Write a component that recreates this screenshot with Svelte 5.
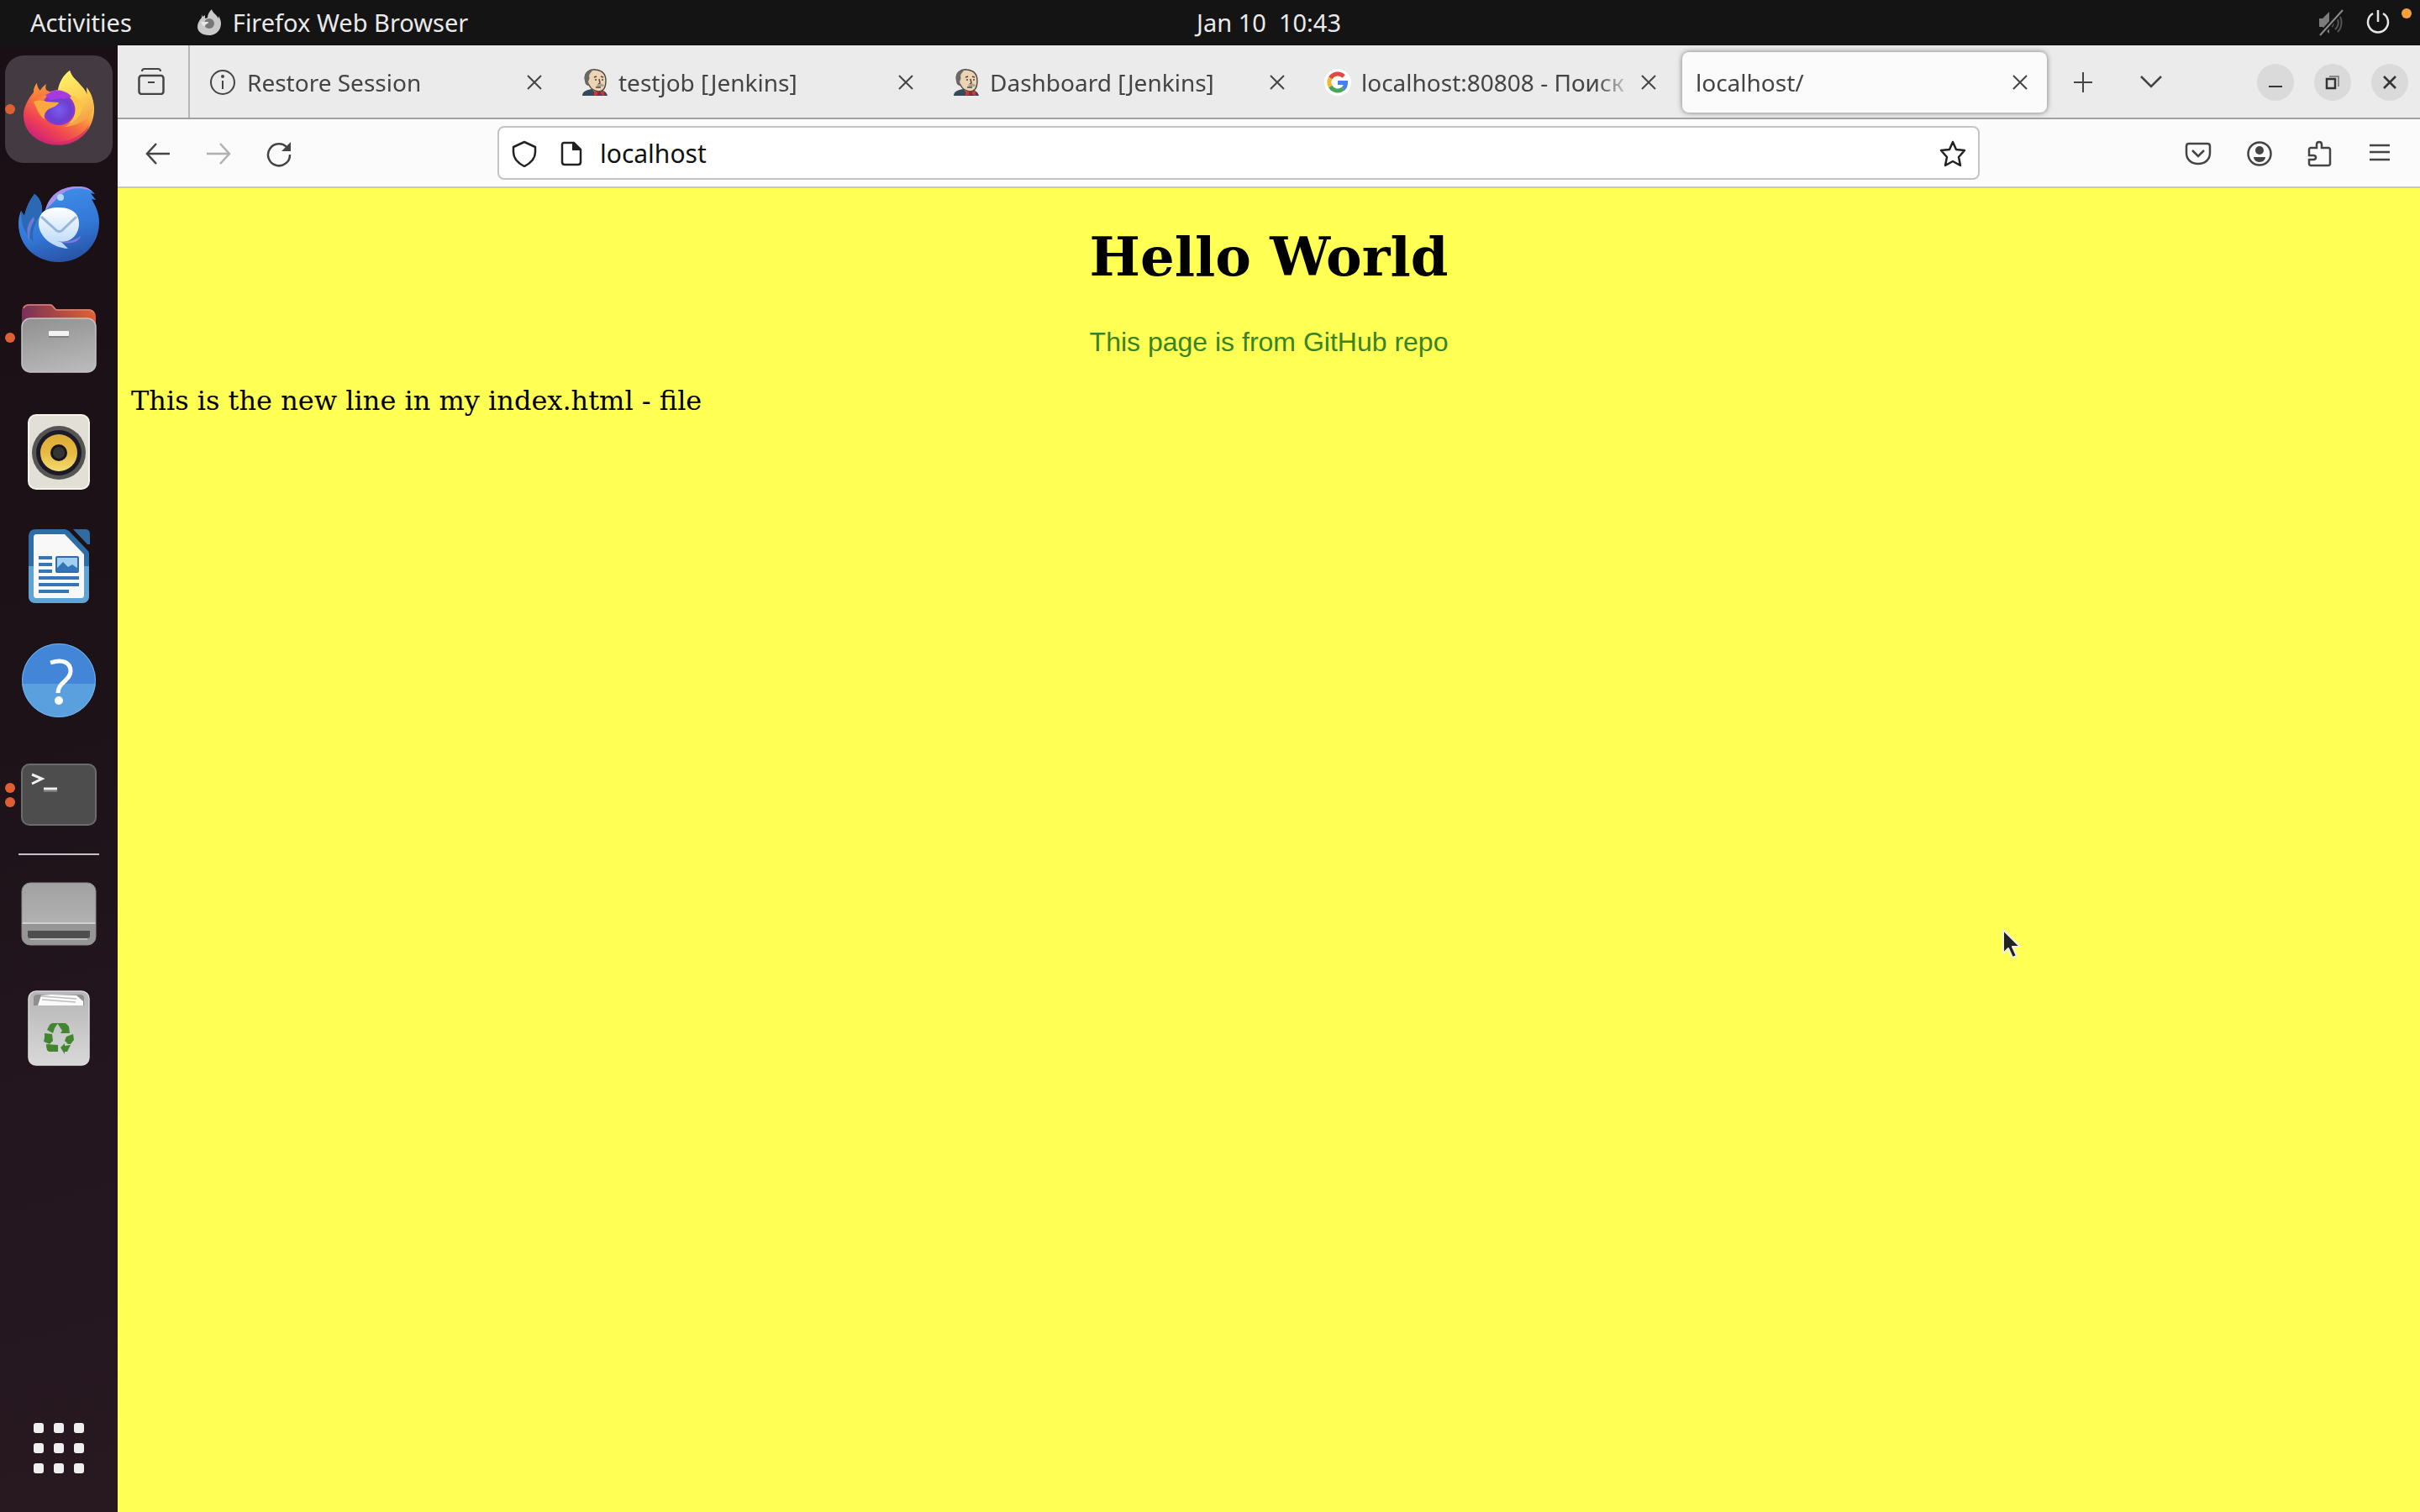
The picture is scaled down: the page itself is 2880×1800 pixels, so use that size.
<script>
  let url = $state('localhost');
  let active = $state(4);

  const tabs = [
    { title: 'Restore Session', icon: 'info' },
    { title: 'testjob [Jenkins]', icon: 'jenkins' },
    { title: 'Dashboard [Jenkins]', icon: 'jenkins' },
    { title: 'localhost:80808 - Поиск', icon: 'google' },
    { title: 'localhost/', icon: null }
  ];

  const dock = [
    { name: 'Firefox Web Browser', icon: 'firefox', windows: 1, focused: true },
    { name: 'Thunderbird Mail', icon: 'thunderbird', windows: 0 },
    { name: 'Files', icon: 'files', windows: 1 },
    { name: 'Rhythmbox', icon: 'rhythmbox', windows: 0 },
    { name: 'LibreOffice Writer', icon: 'writer', windows: 0 },
    { name: 'Help', icon: 'help', windows: 0 },
    { name: 'Terminal', icon: 'terminal', windows: 2 }
  ];
  const places = [
    { name: 'Drive', icon: 'drive', windows: 0 },
    { name: 'Trash', icon: 'trash', windows: 0 }
  ];
  const cells = [0, 1, 2, 3, 4, 5, 6, 7, 8];
</script>

{#snippet cross()}
  <svg class="i32" viewBox="0 0 32 32"><path d="M8 8l16 16M24 8L8 24" fill="none" stroke="currentColor" stroke-width="2" /></svg>
{/snippet}

{#snippet favicon(kind)}
  {#if kind === 'info'}
    <svg class="i32" viewBox="0 0 32 32">
      <circle cx="15" cy="16" r="14" fill="none" stroke="#444" stroke-width="2" />
      <path d="M15 14v10" stroke="#444" stroke-width="2" /><circle cx="15" cy="9" r="2" fill="#444" />
    </svg>
  {:else if kind === 'jenkins'}
    <svg class="i32" viewBox="0 0 32 32">
      <path d="M1 32c0-5 5-7 11-8l9 1c6 0 9 3 10 7z" fill="#34495a" />
      <path d="M11 22l5 6 7-3v-4z" fill="#e8e3dc" />
      <path d="M5 15C2 4 10 0 17 1c9 1 12 7 12 13 0 8-3 13-9 13-6-1-9-3-11-8-2 0-4-1-4-4z" fill="#ecd3b4" stroke="#51463f" stroke-width="1.4" />
      <path d="M4 14C2 5 8 1 14 1c-2 2-4 4-5 7 1 3 0 5-1 7l2 6c-4-2-5-4-6-7z" fill="#6b6865" />
      <path d="M15 10l3-1M23 9l3 1M17 12v2M25 12v2M21 12l1 5-2 1M17 22h6" fill="none" stroke="#51463f" stroke-width="1.5" />
      <path d="M18 19c3-2 6-2 9 0l-1 2h-7z" fill="#aaa198" />
      <path d="M15 26l6 2 6-2v6l-5-2-7 2z" fill="#cf3931" />
      <circle cx="21" cy="29" r="2" fill="#862c2b" />
    </svg>
  {:else if kind === 'google'}
    <svg class="i32" viewBox="0 0 32 32">
      <circle cx="16" cy="16" r="16" fill="#fff" />
      <g fill="none" stroke-width="5">
        <path d="M7.300 11A10 10 0 0 1 23.100 8.900" stroke="#df4b3f" />
        <path d="M7.300 21A10 10 0 0 1 7.300 11" stroke="#f2b92c" />
        <path d="M22.400 23.700A10 10 0 0 1 7.300 21" stroke="#4ba457" />
        <path d="M16 16.500h9.500c0 3-1 5.500-3.100 7.200" stroke="#4a80ee" />
      </g>
    </svg>
  {/if}
{/snippet}

{#snippet appIcon(kind)}
  <svg class="app" viewBox="0 0 128 128" aria-hidden="true">
    {#if kind === 'firefox'}
      <defs>
        <linearGradient id="ffBody" x1="0.85" y1="0.1" x2="0.3" y2="1">
          <stop offset="0" stop-color="#fff05e" /><stop offset="0.3" stop-color="#fcc44a" />
          <stop offset="0.55" stop-color="#f8783d" /><stop offset="0.8" stop-color="#ee3f55" />
          <stop offset="1" stop-color="#d02379" />
        </linearGradient>
        <linearGradient id="ffTail" x1="0.3" y1="0" x2="0.6" y2="1">
          <stop offset="0" stop-color="#fff26a" /><stop offset="0.5" stop-color="#fcd354" />
          <stop offset="1" stop-color="#f59a45" />
        </linearGradient>
        <radialGradient id="ffGlobe" cx="0.5" cy="0.55" r="0.6">
          <stop offset="0" stop-color="#7b5cf0" /><stop offset="0.55" stop-color="#6b3fd0" />
          <stop offset="1" stop-color="#a133d8" />
        </radialGradient>
        <linearGradient id="ffHead" x1="0" y1="0" x2="0.2" y2="1">
          <stop offset="0" stop-color="#f8a23a" /><stop offset="1" stop-color="#f7713c" />
        </linearGradient>
      </defs>
      <path d="M38 33c-3 4-4 7-4 11-7 8-12 18-12 27 0 22 18 35 42 35 24 0 42-18 42-42 0-9-3-18-9-26l1 9c-3-7-7-10-11-15-5-5-8-8-10-14-7 5-12 13-14 23-8 1-12 3-16 6-1-3-1-6 0-10-4 3-6 5-7 8-2-4-2-8-2-12z" fill="url(#ffBody)" />
      <path d="M77 18c-8 6-12 13-14 23 12 1 21 7 22 20 1 12-6 22-16 24 19-1 30-9 36-20 1-11-2-20-8-27l1 9c-3-7-7-10-11-15-5-5-8-8-10-14z" fill="url(#ffTail)" />
      <circle cx="64" cy="63" r="20" fill="url(#ffGlobe)" />
      <path d="M48 47c6-5 14-7 22-4 5 2 8 4 10 8-4-1-7-1-9 1-7-1-12 0-17 2z" fill="#a53bdc" />
      <path d="M34 55c5-2 11-2 15 0l15 1c-1 3-5 5-10 7-5 2-8 6-7 13-6-4-8-10-13-21z" fill="#fda83c" />
      <path d="M38 33c-3 4-4 7-4 11l-4 9 17-5c2-2 4-3 8-4l-6-3c-1-2-1-4 0-7-3 2-6 5-7 8-3-3-4-6-4-9z" fill="url(#ffHead)" />
      <path d="M77 50c9 9 9 22-1 31 17-6 22-27 5-33z" fill="#ffc347" />
      <path d="M28 88c9 13 26 17 43 14 13-3 23-10 29-19-5 15-19 24-36 24-17 0-29-7-36-19z" fill="#cf286f" opacity="0.65" />
    {:else if kind === 'thunderbird'}
      <defs>
        <linearGradient id="tbBody" x1="0.3" y1="0" x2="0.6" y2="1">
          <stop offset="0" stop-color="#4090ea" /><stop offset="0.6" stop-color="#3377d6" /><stop offset="1" stop-color="#2852a3" />
        </linearGradient>
        <linearGradient id="tbMail" x1="0" y1="0" x2="0" y2="1">
          <stop offset="0" stop-color="#fff" /><stop offset="1" stop-color="#b5d7f8" />
        </linearGradient>
      </defs>
      <path d="M48 48C53 28 70 19 88 20c9 0 15 4 19 9l-5-1 6 8-5-1c5 8 9 17 9 28 0 27-21 47-48 47S16 91 16 64c0-5 1-10 3-15l4 6c2-10 6-18 12-26 6 4 10 12 9 23z" fill="url(#tbBody)" />
      <path d="M19 49l4 6c2-10 6-18 12-26 6 4 10 12 9 23-9 10-13 23-10 34-10-9-16-22-15-37z" fill="#2b69b5" />
      <path d="M48 48C53 28 70 19 88 20c7 0 12 2 16 6-11-5-24-5-32 0-11 7-15 15-24 22z" fill="#a891ea" />
      <circle cx="66" cy="33" r="4" fill="#a9dcff" />
      <path d="M40 64c0-14 10-19 24-19s24 6 24 19-9 22-21 22l8 8c-18-1-35-14-35-30z" fill="url(#tbMail)" />
      <path d="M43 56l19 17c2 1 3 1 5 0l18-17" fill="none" stroke="#95b7dc" stroke-width="3" />
      <path d="M62 85c13 2 21-1 28-6-2 8-14 11-28 6z" fill="#7d79de" />
      <path d="M34 56c-9 9-9 19-5 29 0-10 1-17 6-25z" fill="#7079d8" />
    {:else if kind === 'files'}
      <defs>
        <linearGradient id="flBack" x1="0" y1="0" x2="1" y2="0"><stop offset="0" stop-color="#77305a" /><stop offset="1" stop-color="#e2622f" /></linearGradient>
        <linearGradient id="flFront" x1="0.4" y1="0" x2="0.7" y2="1"><stop offset="0" stop-color="#949494" /><stop offset="1" stop-color="#b9b9b9" /></linearGradient>
      </defs>
      <path d="M20 60V33c0-6 3-9 9-9h25c4 0 4 6 8 6h37c6 0 9 4 9 9v25z" fill="url(#flBack)" />
      <path d="M22 29c1-3 3-4 7-4h25c4 0 4 6 8 6h37c4 0 6 2 7 4" fill="none" stroke="#d08579" stroke-width="1.5" />
      <rect x="20" y="41" width="88" height="64" rx="10" fill="url(#flFront)" stroke="#c3c3c3" stroke-width="1.5" />
      <rect x="52" y="56" width="24" height="6" rx="1" fill="#f3f3f3" />
      <path d="M52 63h24" stroke="#777" stroke-width="1.500" />
    {:else if kind === 'rhythmbox'}
      <defs><linearGradient id="rbCone" x1="0" y1="0" x2="0" y2="1"><stop offset="0" stop-color="#dcab38" /><stop offset="0.5" stop-color="#e6b941" /><stop offset="1" stop-color="#f5dc73" /></linearGradient></defs>
      <rect x="28" y="20" width="72" height="88" rx="9" fill="#e2dfd6" stroke="#f4f2ec" stroke-width="2" />
      <circle cx="64" cy="65" r="32" fill="#555553" /><circle cx="64" cy="65" r="27" fill="#1d1a28" />
      <circle cx="64" cy="65" r="22" fill="url(#rbCone)" /><circle cx="64" cy="65" r="10" fill="#161616" /><circle cx="64" cy="65" r="7" fill="#343434" />
    {:else if kind === 'writer'}
      <path d="M37 20h34c2 0 3 1 5 2l22 23c2 2 2 3 2 5v49c0 6-3 9-9 9H37c-6 0-9-3-9-9V29c0-6 3-9 9-9z" fill="#2e6da6" />
      <path d="M28 64h72v35c0 6-3 9-9 9H37c-6 0-9-3-9-9z" fill="#60a5d2" />
      <path d="M38 26h33l23 24v48c0 3-1 4-4 4H38c-3 0-4-1-4-4V30c0-3 1-4 4-4z" fill="#f8f8f8" />
      <path d="M81 20h14c4 0 6 2 6 6v12h-3z" fill="#326ba0" />
      <path d="M40 54h16M40 62h16M40 70h16M40 78h48M40 86h48M40 94h36" stroke="#3475b8" stroke-width="4" />
      <rect x="61" y="53" width="26" height="18" rx="1" fill="#a1d1ee" stroke="#2f6cae" stroke-width="2" />
      <path d="M62 70v-4l7-7 6 6 5-3 7 5v3z" fill="#3475b8" />
    {:else if kind === 'help'}
      <circle cx="64" cy="64" r="44" fill="#4385d6" />
      <path d="M20.200 68A44 44 0 0 0 107.800 68z" fill="#5aa0df" />
      <circle cx="64" cy="64" r="43.500" fill="none" stroke="#71b2e8" stroke-width="1" />
      <path d="M54 43c15-5 24 0 24 10 0 11-15 13-15 26" fill="none" stroke="#fff" stroke-width="5" stroke-linejoin="round" />
      <circle cx="64" cy="88" r="5" fill="#fff" />
    {:else if kind === 'terminal'}
      <rect x="20" y="28" width="88" height="72" rx="9" fill="#4d4d4d" stroke="#6b6b6b" stroke-width="2" />
      <path d="M32 40l12 5-12 6" fill="none" stroke="#f1f1f1" stroke-width="3" />
      <path d="M46 57h16" stroke="#f1f1f1" stroke-width="3" /><path d="M46 59.500h16" stroke="#8c8c8c" stroke-width="2" />
    {:else if kind === 'drive'}
      <defs><linearGradient id="dvTop" x1="0" y1="0" x2="0" y2="1"><stop offset="0" stop-color="#a1a1a1" /><stop offset="1" stop-color="#bababa" /></linearGradient></defs>
      <rect x="20" y="27" width="88" height="74" rx="10" fill="url(#dvTop)" />
      <path d="M20 76h88v15c0 6-4 10-10 10H30c-6 0-10-4-10-10z" fill="#969696" />
      <path d="M20 75h88" stroke="#d0d0d0" stroke-width="2" />
      <path d="M27 84h74v6c0 2-1 3-3 3H30c-2 0-3-1-3-3z" fill="#4e4e4e" />
      <path d="M30 94h68" stroke="#bcbcbc" stroke-width="2" />
      <rect x="20" y="27" width="88" height="74" rx="10" fill="none" stroke="#8d8d8d" stroke-width="1" />
    {:else if kind === 'trash'}
      <defs><linearGradient id="trCan" x1="0" y1="0" x2="0" y2="1"><stop offset="0" stop-color="#b6b6b6" /><stop offset="1" stop-color="#d8d8d8" /></linearGradient></defs>
      <rect x="28" y="20" width="72" height="88" rx="9" fill="url(#trCan)" stroke="#dadada" stroke-width="1.5" />
      <path d="M34 37V28c0-3 2-4 5-4h50c3 0 5 1 5 4v9z" fill="#8e8e8e" />
      <path d="M39 37l4-12 12-1 30 1 8 7v5z" fill="#fafafa" />
      <path d="M44 30l40 3M43 26l42 3" stroke="#bdbdbd" stroke-width="1.500" />
      <g fill="#438630">
        <path d="M56 58h7l-4 6-2 6-7-4 3-6z" /><path d="M62 58h10l4 4 1 8H66l2-3z" />
        <path d="M47 70l9 1 1 8-4 4-7-3 1-5z" /><path d="M73 74l8-3 1 7-4 5h-3l-4-4z" />
        <path d="M49 83l14 1v8H53c-3 0-4-4-4-9z" /><path d="M66 87l5-5v3l7-1-4 8h-3v3z" />
      </g>
    {/if}
  </svg>
{/snippet}

{#snippet dockItem(item)}
  <button class="tile" class:focused={item.focused} aria-label={item.name}>
    {#if item.windows}
      <span class="dots">{#each Array(item.windows) as _}<i></i>{/each}</span>
    {/if}
    {@render appIcon(item.icon)}
  </button>
{/snippet}

<div class="desktop">
  <header class="topbar">
    <div class="side start">
      <button class="activities">Activities</button>
      <button class="appmenu">
        <svg class="i32" viewBox="0 0 32 32" aria-hidden="true">
          <path d="M7 6L7 10c-3 3-5 7-5 11 0 6 6 10 14 10s14-6 14-14c0-3-1-6-3-9v3c-2-5-7-6-8-11-3 3-5 6-5 10l-3 1V7L8 9z" fill="#c9c9c9" />
          <circle cx="16" cy="17" r="6" fill="#777" />
          <path d="M6 15h9c0 3-4 2-4 5-3 0-4-2-5-5z" fill="#e6e6e6" />
        </svg>
        Firefox Web Browser
      </button>
    </div>
    <button class="clock">Jan 10&nbsp; 10:43</button>
    <div class="side end">
      <button class="system" aria-label="System menu">
        <svg class="i32" viewBox="0 0 32 32" aria-hidden="true">
          <path d="M2 11h4l8-8v26l-8-8H2z" fill="#7b7b7b" />
          <path d="M17 11c3 3 3 7 0 10M21 8c5 5 5 11 0 16M24 5c6 6 6 16 0 22" fill="none" stroke="#555" stroke-width="2" />
          <path d="M30 1L3 31" stroke="#141414" stroke-width="6" /><path d="M30 1L3 31" stroke="#8c8c8c" stroke-width="2" />
        </svg>
        <svg class="i32" viewBox="0 0 32 32" aria-hidden="true">
          <path d="M10 5a12 12 0 1 0 12 0M16 1v14" fill="none" stroke="#e6e6e6" stroke-width="2.500" />
        </svg>
      </button>
      <span class="notice"></span>
    </div>
  </header>

  <div class="workspace">
    <nav class="dock" aria-label="Dock">
      {#each dock as item}{@render dockItem(item)}{/each}
      <hr />
      {#each places as item}{@render dockItem(item)}{/each}
      <button class="tile apps" aria-label="Show Applications">
        <span class="grid">{#each cells as _}<i></i>{/each}</span>
      </button>
    </nav>

    <section class="browser">
      <div class="tabbar">
        <button class="view" aria-label="Firefox View">
          <svg class="i32" viewBox="0 0 32 32">
            <path d="M5 4c0-2 1-3 3-3h16c2 0 3 1 3 3" fill="none" stroke="currentColor" stroke-width="2" />
            <rect x="1.500" y="9" width="29" height="22" rx="3" fill="none" stroke="currentColor" stroke-width="2.500" />
            <path d="M12 17h8" stroke="currentColor" stroke-width="2" />
          </svg>
        </button>
        <div class="tabs">
          {#each tabs as tab, i}
            <div class="tab" class:active={active === i}>
              <button class="pick" aria-current={active === i} onclick={() => (active = i)}>
                {#if tab.icon}{@render favicon(tab.icon)}{/if}
                <span class="label">{tab.title}</span>
              </button>
              <button class="close" aria-label="Close tab">{@render cross()}</button>
            </div>
          {/each}
        </div>
        <button class="tool newtab" aria-label="New tab">
          <svg class="i32" viewBox="0 0 32 32"><path d="M15 5v24M4 17h22" stroke="currentColor" stroke-width="2" /></svg>
        </button>
        <button class="tool list" aria-label="List all tabs">
          <svg class="i32" viewBox="0 0 32 32"><path d="M4 10l12 12 12-12" fill="none" stroke="currentColor" stroke-width="2.500" /></svg>
        </button>
        <div class="controls">
          <button aria-label="Minimize"><svg class="i32" viewBox="0 0 32 32"><path d="M8 21h16" stroke="currentColor" stroke-width="2" /></svg></button>
          <button aria-label="Restore"><svg class="i32" viewBox="0 0 32 32"><path d="M9 12h10v11H9z" fill="none" stroke="currentColor" stroke-width="2.500" /><path d="M12 9h11v12" fill="none" stroke="#8a8a8a" stroke-width="2" /></svg></button>
          <button aria-label="Close"><svg class="i32" viewBox="0 0 32 32"><path d="M9 9l14 14M23 9L9 23" stroke="currentColor" stroke-width="2.500" /></svg></button>
        </div>
      </div>

      <div class="toolbar">
        <button class="tool" aria-label="Back">
          <svg class="i32" viewBox="0 0 32 32"><path d="M30 16H3M14 4L3 16l11 12" fill="none" stroke="currentColor" stroke-width="2.500" /></svg>
        </button>
        <button class="tool" aria-label="Forward" disabled>
          <svg class="i32" viewBox="0 0 32 32"><path d="M2 16h27M18 4l11 12-11 12" fill="none" stroke="currentColor" stroke-width="2.500" /></svg>
        </button>
        <button class="tool" aria-label="Reload">
          <svg class="i32" viewBox="0 0 32 32"><path d="M26 9A13 13 0 1 0 29 17" fill="none" stroke="currentColor" stroke-width="2.500" /><path d="M30 2v11H19z" fill="currentColor" /></svg>
        </button>
        <div class="urlbar">
          <svg class="i32" viewBox="0 0 32 32"><path d="M16 2L29 8v6c0 7-5 13-13 17C8 27 3 21 3 14V8z" fill="none" stroke="#222" stroke-width="2.500" stroke-linejoin="round" /></svg>
          <svg class="i32 page-icon" viewBox="0 0 32 32"><path d="M7 3h12l8 8v15c0 2-1 3-3 3H8c-2 0-3-1-3-3V5c0-1 1-2 2-2z" fill="none" stroke="#222" stroke-width="2.500" /><path d="M17 2l11 10H17z" fill="#222" /></svg>
          <input type="text" aria-label="Address" bind:value={url} />
          <button class="star" aria-label="Bookmark this page">
            <svg class="i32" viewBox="0 0 32 32"><path d="M16 2l4 9 10 1-7 8 2 10-9-5-9 5 2-10-7-8 10-1z" fill="none" stroke="#222" stroke-width="2.500" stroke-linejoin="round" /></svg>
          </button>
        </div>
        <button class="tool" aria-label="Save to Pocket">
          <svg class="i32" viewBox="0 0 32 32"><path d="M5 4h22c2 0 3 1 3 3v8c0 8-6 13-14 13S2 23 2 15V7c0-2 1-3 3-3z" fill="none" stroke="currentColor" stroke-width="2.500" /><path d="M9 12l7 7 7-7" fill="none" stroke="currentColor" stroke-width="2.500" /></svg>
        </button>
        <button class="tool" aria-label="Account">
          <svg class="i32" viewBox="0 0 32 32"><circle cx="17" cy="16" r="13.500" fill="none" stroke="currentColor" stroke-width="2.500" /><circle cx="17" cy="12" r="5" fill="currentColor" /><path d="M10 20h14c0 3-3 6-7 6s-7-3-7-6z" fill="currentColor" /></svg>
        </button>
        <button class="tool" aria-label="Extensions">
          <svg class="i32" viewBox="0 0 32 32"><path d="M4 18v-7c0-1 1-2 2-2h7V5c0-4 6-4 6 0v4h8c1 0 2 1 2 2v17c0 1-1 2-2 2H6c-1 0-2-1-2-2v-5h5c4 0 4-5 0-5z" fill="none" stroke="currentColor" stroke-width="2.500" /></svg>
        </button>
        <button class="tool" aria-label="Open application menu">
          <svg class="i32" viewBox="0 0 32 32"><path d="M4 6h24M4 14h24M4 23h24" stroke="currentColor" stroke-width="2.500" /></svg>
        </button>
      </div>

      <main class="page">
        <h1>Hello World</h1>
        <p class="note">This page is from GitHub repo</p>
        <p>This is the new line in my index.html - file</p>
        <svg class="pointer" viewBox="0 0 24 38" aria-hidden="true">
          <path d="M2 2v28l6-6 5 11 5-2-5-11h9z" fill="#222" stroke="#eee" stroke-width="2" stroke-linejoin="round" />
        </svg>
      </main>
    </section>
  </div>
</div>

<style>
  :global(body) { margin: 0; }
  .desktop {
    display: flex;
    flex-direction: column;
    min-height: 100vh;
    font-family: 'Noto Sans', 'Open Sans', sans-serif;
    font-size: 28px;
    line-height: 40px;
    color: #444;
  }
  button {
    border: 0;
    padding: 0;
    background: none;
    font: inherit;
    color: inherit;
    display: flex;
    align-items: center;
    justify-content: center;
  }
  .i32 { width: 32px; height: 32px; flex: none; display: block; }

  .topbar {
    display: flex;
    align-items: center;
    height: 54px;
    background: #141414;
    color: #eaeaea;
    font-size: 29px;
  }
  .side { flex: 1 1 0; display: flex; align-items: center; }
  /* The clock is centred over the area beside the 140px dock. */
  .start { flex-basis: 140px; }
  .activities { padding-left: 36px; }
  .appmenu { margin-left: 76px; gap: 12px; }
  .end { justify-content: flex-end; }
  .system { gap: 24px; }
  .notice {
    width: 12px;
    height: 12px;
    margin: 0 10px 22px 12px;
    border-radius: 50%;
    background: #f8a13c;
  }

  .workspace { flex: 1; display: flex; }
  .dock {
    flex: none;
    width: 140px;
    box-sizing: border-box;
    padding: 12px 6px;
    display: flex;
    flex-direction: column;
    gap: 8px;
    background: linear-gradient(165deg, #190f15 0%, #1c1218 45%, #22151d 65%, #281921 100%);
  }
  .tile {
    position: relative;
    width: 128px;
    height: 128px;
    border-radius: 22px;
  }
  .tile.focused { background: #433b41; }
  .app { width: 128px; height: 128px; display: block; }
  .dots {
    position: absolute;
    left: 0;
    top: 0;
    bottom: 0;
    display: flex;
    flex-direction: column;
    justify-content: center;
    gap: 5px;
  }
  .dots i { width: 12px; height: 12px; border-radius: 50%; background: #dd5f33; }
  .dock hr {
    width: 96px;
    height: 2px;
    margin: -2px auto;
    border: 0;
    background: #c5c1c4;
  }
  .apps { margin-top: auto; }
  .grid { display: grid; grid-template-columns: repeat(3, 12px); gap: 12px; }
  .grid i { height: 12px; border-radius: 3px; background: #eeeeec; }

  .browser { flex: 1; min-width: 0; display: flex; flex-direction: column; }
  .tabbar {
    display: flex;
    align-items: stretch;
    height: 86px;
    background: #ebebeb;
    border-bottom: 2px solid #a2a2a2;
  }
  .view { width: 86px; padding-right: 4px; border-right: 2px solid #b5b5b5; }
  .tabs { display: flex; flex: 0 1 2210px; min-width: 0; margin-left: 4px; }
  .tab {
    flex: 1;
    min-width: 0;
    display: flex;
    align-items: stretch;
    margin: 8px 4px 6px;
    padding: 0 16px;
    border-radius: 8px;
  }
  .tab.active { background: #fbfbfb; box-shadow: 0 0 6px rgba(0, 0, 0, 0.5); }
  .pick { flex: 1; min-width: 0; gap: 12px; justify-content: flex-start; text-align: left; }
  .label {
    flex: 1;
    min-width: 0;
    overflow: hidden;
    white-space: nowrap;
    mask-image: linear-gradient(to left, transparent, #000 48px);
  }
  .close { flex: none; }
  .tool { flex: none; width: 64px; }
  .newtab { margin-left: 8px; }
  .list { margin-left: 16px; }
  .controls { display: flex; align-items: center; gap: 24px; margin-left: auto; padding: 2px 14px 0 0; }
  .controls button { width: 44px; height: 44px; border-radius: 50%; background: #dadada; color: #333; }

  .toolbar {
    display: flex;
    align-items: center;
    gap: 8px;
    height: 80px;
    padding: 0 16px;
    background: #fbfbfb;
    border-bottom: 2px solid #c6c6c6;
  }
  .toolbar .tool { padding-top: 2px; }
  .tool:disabled { color: #b0b0b0; }
  .urlbar {
    flex: 1;
    min-width: 0;
    box-sizing: border-box;
    display: flex;
    align-items: center;
    height: 64px;
    margin: 0 220px;
    padding: 2px 14px 0;
    border: 2px solid #c4c4c4;
    border-radius: 8px;
    background: #fff;
  }
  .page-icon { margin: 0 18px 0 24px; }
  .urlbar input {
    flex: 1;
    min-width: 0;
    border: 0;
    padding: 0;
    outline: 0;
    background: none;
    font: inherit;
    font-size: 30px;
    color: #111;
  }

  .page {
    position: relative;
    flex: 1;
    padding: 0 16px;
    background: #ffff54;
    color: #000;
    font: 32px/38px 'DejaVu Serif', serif;
  }
  .page h1 { margin: 44px 0 0; font-size: 64px; line-height: 76px; text-align: center; }
  .page p { margin: 32px 0; }
  .page .note { margin-top: 44px; font-family: 'Liberation Sans', sans-serif; text-align: center; color: #3a8323; }
  .pointer { position: absolute; left: 2242px; top: 881px; width: 24px; height: 38px; }
</style>
